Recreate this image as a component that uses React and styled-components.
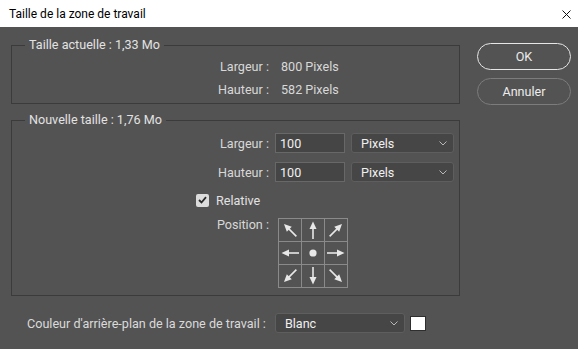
import React from "react";
import styled, { createGlobalStyle } from "styled-components";

const Global = createGlobalStyle`
  html, body { margin: 0; padding: 0; }
  body {
    background: #535353;
    font-family: Roboto, "Liberation Sans", sans-serif;
    font-size: 12.6px;
    color: #d8d8d8;
    -webkit-font-smoothing: antialiased;
  }
`;

const Window = styled.div`
  width: 578px;
  height: 349px;
  background: #535353;
  display: flex;
  flex-direction: column;
`;

const TitleBar = styled.div`
  height: 27px;
  background: #ffffff;
  display: flex;
  align-items: center;
  justify-content: space-between;
  padding: 0 7px 0 9px;
  box-sizing: border-box;
`;

const Title = styled.span`
  color: #000;
  font-size: 12px;
`;

const Close = styled.span`
  display: flex;
  width: 9px;
  height: 9px;
  margin-top: 1px;
`;

const Body = styled.div`
  display: flex;
  padding: 10px 0 0 11px;
`;

const Main = styled.div`
  width: 449px;
  display: flex;
  flex-direction: column;
`;

const Group = styled.fieldset`
  margin: 0;
  padding: ${(p) => p.$pad};
  border: 1px solid #3b3b3b;
  min-width: 0;
  display: flex;
  flex-direction: column;
  gap: ${(p) => p.$gap || "0px"};
  & + & { margin-top: 8px; }
`;

const Legend = styled.legend`
  margin-left: 13px;
  padding: 0 4px;
  line-height: 16px;
  color: #e2e2e2;
`;

const Row = styled.div`
  display: flex;
  align-items: ${(p) => p.$align || "center"};
  height: ${(p) => p.$h || "23px"};
  gap: ${(p) => p.$gap || "6px"};
  margin-top: ${(p) => p.$mt || "0px"};
`;

const Label = styled.span`
  width: 257px;
  text-align: right;
  flex: none;
  line-height: ${(p) => p.$lh || "normal"};
`;

const Value = styled.span`
  color: #d8d8d8;
`;

const Input = styled.div`
  box-sizing: border-box;
  width: 70px;
  height: 20px;
  background: #454545;
  border: 1px solid #686868;
  color: #f0f0f0;
  padding-left: 4px;
  display: flex;
  align-items: center;
`;

const Select = styled.div`
  box-sizing: border-box;
  width: ${(p) => p.$w};
  height: 20px;
  background: #464646;
  border: 1px solid #5e5e5e;
  border-radius: 3px;
  color: #f0f0f0;
  padding: 0 6px 0 ${(p) => p.$pl || "9px"};
  display: flex;
  align-items: center;
  justify-content: space-between;
`;

const CheckRow = styled.label`
  display: flex;
  align-items: center;
  gap: 7px;
  height: 16px;
  margin-left: 184px;
  color: #e2e2e2;
`;

const Box = styled.span`
  width: 13px;
  height: 13px;
  border-radius: 2px;
  background: #dcdcdc;
  display: flex;
  align-items: center;
  justify-content: center;
`;

const AnchorGrid = styled.div`
  display: grid;
  grid-template-columns: repeat(3, 22px);
  grid-template-rows: repeat(3, 22px);
  gap: 1px;
  padding: 1px;
  background: #8a8a8a;
`;

const Cell = styled.div`
  background: #535353;
  display: flex;
  align-items: center;
  justify-content: center;
`;

const BottomRow = styled.div`
  display: flex;
  align-items: center;
  margin-top: 17px;
  padding-left: 16px;
  gap: 9px;
  color: #dadada;
`;

const Swatch = styled.span`
  width: 16px;
  height: 15px;
  box-sizing: border-box;
  background: #fff;
  border: 1px solid #2e2e2e;
  margin-left: -4px;
`;

const Actions = styled.div`
  display: flex;
  flex-direction: column;
  gap: 8px;
  margin: 6px 0 0 17px;
`;

const Pill = styled.button`
  width: 94px;
  height: 27px;
  box-sizing: border-box;
  border-radius: 14px;
  background: #535353;
  border: 1px solid ${(p) => (p.$primary ? "#e6e6e6" : "#7c7c7c")};
  color: #ececec;
  font-family: inherit;
  font-size: 12.6px;
  padding: 0;
`;

const Chevron = () => (
  <svg width="8" height="5" viewBox="0 0 8 5">
    <path d="M0.5 0.5 L4 4 L7.5 0.5" fill="none" stroke="#b8b8b8" strokeWidth="1" />
  </svg>
);

const Arrow = ({ angle }) => (
  <svg width="22" height="22" viewBox="0 0 22 22">
    <g transform={`rotate(${angle} 11 11)`}>
      <line x1="11" y1="20" x2="11" y2="8" stroke="#e8e8e8" strokeWidth="1.6" />
      <polygon points="11,2.5 7.5,10 14.5,10" fill="#e8e8e8" />
    </g>
  </svg>
);

const Dot = () => (
  <svg width="22" height="22" viewBox="0 0 22 22">
    <circle cx="11" cy="11" r="3.6" fill="#e8e8e8" />
  </svg>
);

const cells = [-45, 0, 45, -90, null, 90, -135, 180, 135];

export default function App() {
  return (
    <>
      <Global />
      <Window>
        <TitleBar>
          <Title>Taille de la zone de travail</Title>
          <Close>
            <svg width="9" height="9" viewBox="0 0 9 9">
              <path d="M0.5 0.5 L8.5 8.5 M8.5 0.5 L0.5 8.5" stroke="#111" strokeWidth="1" />
            </svg>
          </Close>
        </TitleBar>
        <Body>
          <Main>
            <Group $pad="2px 0 2px 0">
              <Legend>Taille actuelle : 1,33 Mo</Legend>
              <Row $gap="12px">
                <Label>Largeur :</Label>
                <Value>800 Pixels</Value>
              </Row>
              <Row $gap="12px">
                <Label>Hauteur :</Label>
                <Value>582 Pixels</Value>
              </Row>
            </Group>
            <Group $pad="5px 0 7px 0" $gap="10px">
              <Legend>Nouvelle taille : 1,76 Mo</Legend>
              <Row $h="20px">
                <Label>Largeur :</Label>
                <Input>100</Input>
                <Select $w="103px">
                  Pixels
                  <Chevron />
                </Select>
              </Row>
              <Row $h="20px" $mt="-1px">
                <Label>Hauteur :</Label>
                <Input>100</Input>
                <Select $w="103px">
                  Pixels
                  <Chevron />
                </Select>
              </Row>
              <CheckRow>
                <Box>
                  <svg width="9" height="8" viewBox="0 0 9 8">
                    <path d="M1 4 L3.5 6.5 L8 1.2" fill="none" stroke="#2a2a2a" strokeWidth="1.8" />
                  </svg>
                </Box>
                Relative
              </CheckRow>
              <Row $h="70px" $gap="9px" $align="flex-start">
                <Label $lh="14px">Position :</Label>
                <AnchorGrid>
                  {cells.map((a, i) => (
                    <Cell key={i}>{a === null ? <Dot /> : <Arrow angle={a} />}</Cell>
                  ))}
                </AnchorGrid>
              </Row>
            </Group>
            <BottomRow>
              <span>Couleur d'arrière-plan de la zone de travail :</span>
              <Select $w="130px">
                Blanc
                <Chevron />
              </Select>
              <Swatch />
            </BottomRow>
          </Main>
          <Actions>
            <Pill $primary>OK</Pill>
            <Pill>Annuler</Pill>
          </Actions>
        </Body>
      </Window>
    </>
  );
}
